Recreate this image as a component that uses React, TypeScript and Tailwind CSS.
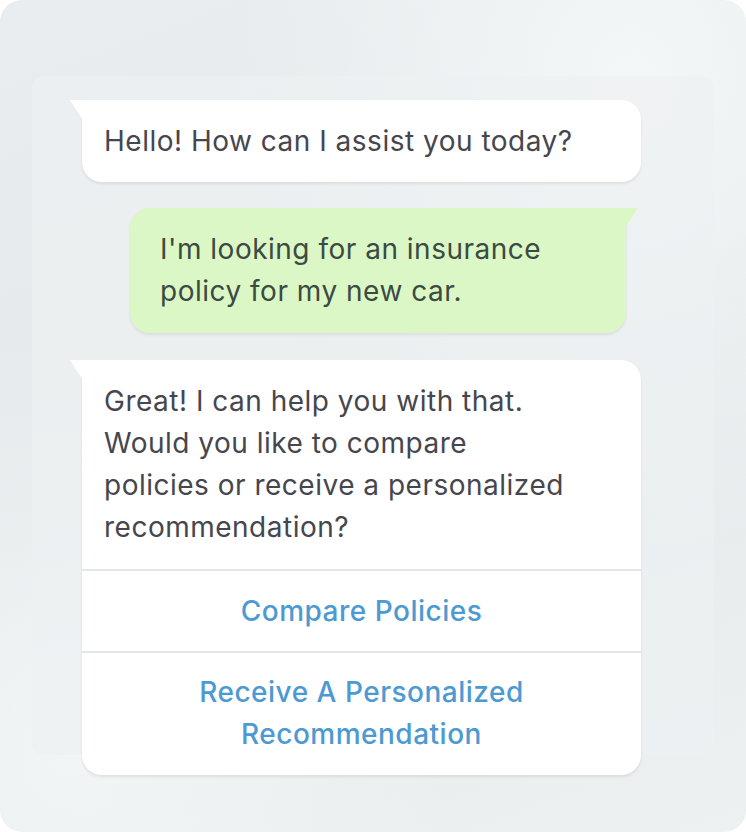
import React from "react";

const font = { fontFamily: "Inter, 'Noto Sans', sans-serif" };

export default function App() {
  return (
    <div className="w-[746px] h-[832px] bg-white">
      <div
        className="w-[746px] h-[832px] rounded-[22px] overflow-hidden pt-[76px] px-[32px] bg-[radial-gradient(ellipse_at_85%_10%,#f4f7f8_0%,rgba(244,247,248,0)_45%),radial-gradient(ellipse_at_10%_90%,#f2f5f6_0%,rgba(242,245,246,0)_40%),linear-gradient(160deg,#e9edef_0%,#e4e8ea_50%,#edf1f2_100%)]"
        style={font}
      >
        <div className="h-[679px] rounded-[12px] bg-[#eef1f2]/70 pt-[24px]">
          {/* Bubble 1 */}
          <div className="relative ml-[50px] w-[559px] bg-white rounded-[20px] rounded-tl-none shadow-[0_2px_3px_rgba(0,0,0,0.08)] px-[22px] py-[20px] text-[28px] tracking-[0.5px] leading-[42px] text-[#46464e]">
            <div className="absolute left-[-12px] top-0 w-[13px] h-[20px] bg-white [clip-path:polygon(0_0,100%_0,100%_100%)]" />
            Hello! How can I assist you today?
          </div>

          {/* Bubble 2 */}
          <div className="relative mt-[26px] ml-[98px] w-[496px] bg-[#dcf7c6] rounded-[20px] rounded-tr-none shadow-[0_2px_3px_rgba(0,0,0,0.08)] pl-[30px] pr-[10px] pt-[20px] pb-[21px] text-[28px] tracking-[0.5px] leading-[42px] text-[#3b4a42] whitespace-nowrap">
            <div className="absolute right-[-12px] top-0 w-[13px] h-[20px] bg-[#dcf7c6] [clip-path:polygon(0_0,100%_0,0_100%)]" />
            I'm looking for an insurance
            <br />
            policy for my new car.
          </div>

          {/* Bubble 3 */}
          <div className="relative mt-[27px] ml-[50px] w-[559px] bg-white rounded-[20px] rounded-tl-none shadow-[0_2px_3px_rgba(0,0,0,0.08)] text-[28px] tracking-[0.5px] leading-[42px]">
            <div className="absolute left-[-12px] top-0 w-[13px] h-[20px] bg-white [clip-path:polygon(0_0,100%_0,100%_100%)]" />
            <div className="pl-[22px] pr-[10px] pt-[20px] pb-[21px] text-[#46464e] whitespace-nowrap">
              Great! I can help you with that.
              <br />
              Would you like to compare
              <br />
              policies or receive a personalized
              <br />
              recommendation?
            </div>
            <div className="border-t-2 border-[#e4e5e7] h-[82px] flex items-center justify-center font-medium text-[#4d9ad2]">
              Compare Policies
            </div>
            <div className="border-t-2 border-[#e4e5e7] pt-[18px] pb-[20px] text-center font-medium text-[#4d9ad2]">
              Receive A Personalized
              <br />
              Recommendation
            </div>
          </div>
        </div>
      </div>
    </div>
  );
}
